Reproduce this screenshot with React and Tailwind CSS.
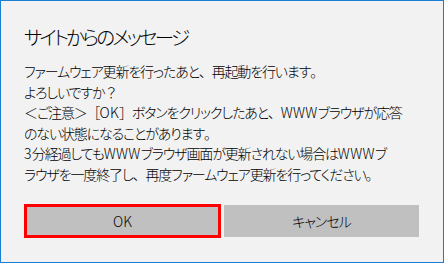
function F({ children }) {
  return <span className="[font-feature-settings:normal]">{children}</span>;
}
function L({ children }) {
  return <span className="tracking-[0.3px]">{children}</span>;
}

export default function App() {
  return (
    <div className="w-[444px] h-[263px] box-border border border-[#1a7fd4] bg-[#f2f2f2] text-[#000] [font-family:'Noto_Sans_CJK_JP','Noto_Sans',sans-serif] [font-feature-settings:'palt'] overflow-hidden">
      <div className="pt-[23px] pl-[23px] pr-[23px]">
        <div className="text-[19.5px] leading-[26px] font-light tracking-[-2.8px]">サイトからのメッセージ</div>
        <div className="mt-[11px] text-[14px] leading-[20.5px] font-light whitespace-nowrap tracking-[-1.15px]">
          ファームウェア更新を行ったあと<F>、</F>再起動を行います<F>。</F><br />
          よろしいですか<F>？</F><br />
          <F>＜</F>ご注意<F>＞［</F><L>OK</L><F>］</F>ボタンをクリックしたあと<F>、</F><L>WWW</L>ブラウザが応答<br />
          のない状態になることがあります<F>。</F><br />
          <L>3</L>分経過しても<L>WWW</L>ブラウザ画面が更新されない場合は<L>WWW</L>ブ<br />
          ラウザを一度終了し<F>、</F>再度ファームウェア更新を行ってください<F>。</F>
        </div>
        <div className="mt-[20px] flex items-center font-light">
          <div className="w-[197px] h-[34px] shrink-0 box-border border-[3px] border-[#ff0000] bg-[#c0c0c0] flex items-center justify-center text-[14px]">OK</div>
          <div className="ml-[3px] w-[195px] h-[32px] shrink-0 bg-[#c0c0c0] flex items-center justify-center text-[14px] tracking-[-1px]">キャンセル</div>
        </div>
      </div>
    </div>
  );
}
